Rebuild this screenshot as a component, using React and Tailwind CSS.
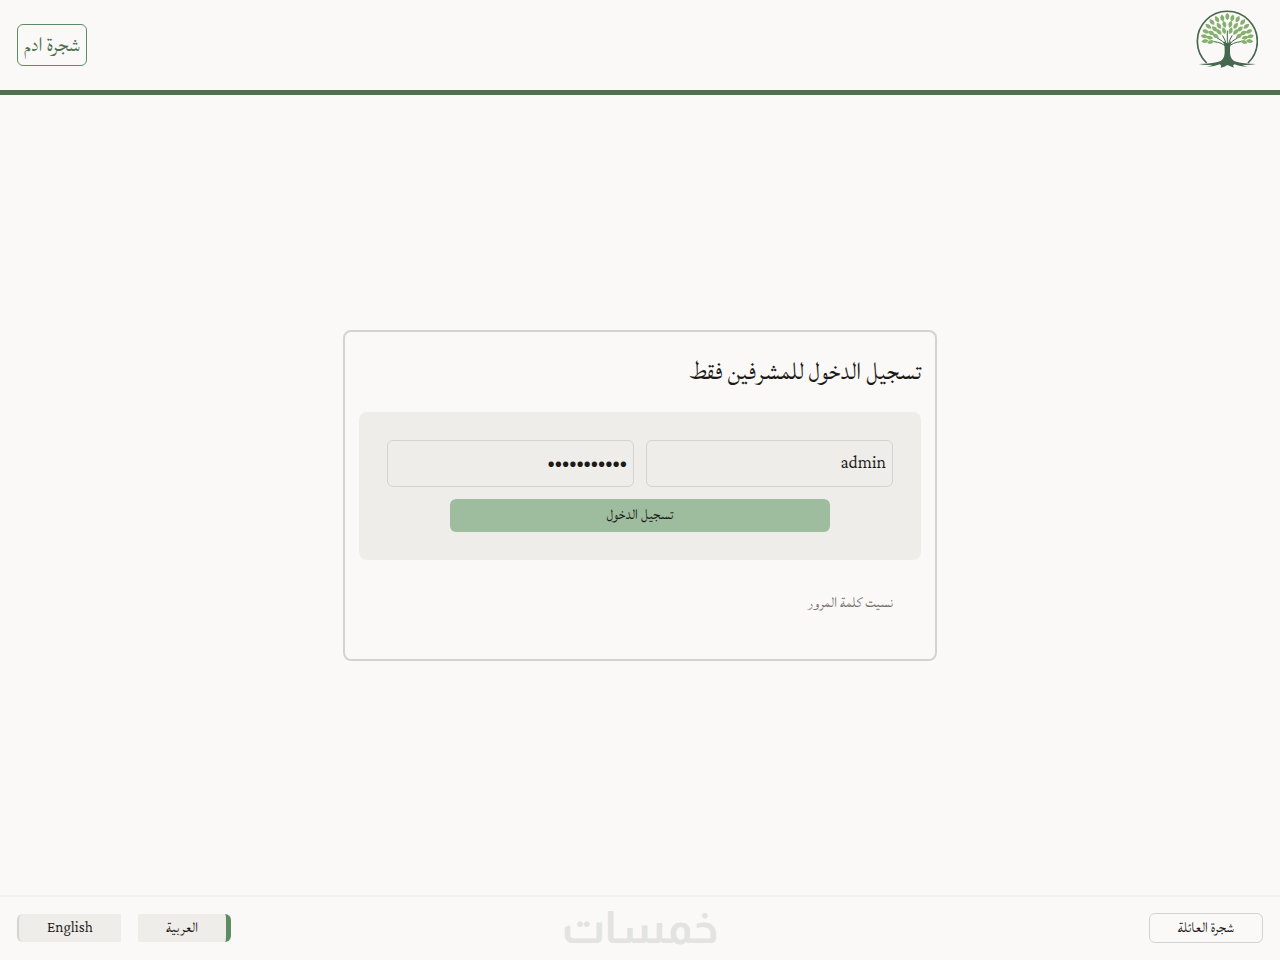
import React, { useState } from 'react';

// right half of the crown: [x, y, rotation], mirrored around the trunk
const leaves = [
  [15, 43, 12], [31, 47, 28], [46, 55, 40], [57, 68, 52], [65, 83, 64], [69, 98, 80],
  [9, 62, 14], [25, 66, 34], [38, 76, 48], [48, 88, 60], [53, 102, 80],
  [10, 81, 20], [25, 85, 42], [35, 97, 58],
  [67, 112, 98], [50, 115, 104],
];

const TreeLogo = () => (
  <svg viewBox="18 16 186 180" className="h-[60px] w-[62px]" role="img" aria-label="شجرة العائلة">
    <path d="M50 178 A90 90 0 1 1 174 178" fill="none" stroke="#45684e" strokeWidth="5" />
    <g fill="none" stroke="#45684e" strokeLinecap="round" strokeWidth="3">
      <path d="M112 130 V82" />
      <path d="M109 124 Q106 108 98 96 M115 124 Q118 108 126 96" />
      <path d="M108 126 Q100 111 82 103 M116 126 Q124 111 142 103" />
      <path d="M108 129 Q96 116 72 114 M116 129 Q128 116 152 114" />
    </g>
    <g fill="#86b06f">
      <path d="M112 27 Q124 38 112 50 Q100 38 112 27z" />
      {leaves.map(([x, y, r]) => (
        <React.Fragment key={`${x}-${y}`}>
          <path d="M0 -11 Q12 0 0 11 Q-12 0 0 -11z" transform={`translate(${112 + x} ${y}) rotate(${r})`} />
          <path d="M0 -11 Q12 0 0 11 Q-12 0 0 -11z" transform={`translate(${112 - x} ${y}) rotate(${-r})`} />
        </React.Fragment>
      ))}
    </g>
    <path
      d="M101 112 Q112 126 123 112 Q119 130 120 148 Q121 166 134 173 Q160 181 198 181 Q174 185 156 183 Q166 188 174 190 Q148 188 134 182 Q126 184 132 192 Q120 188 112 184 Q104 190 92 192 Q96 186 90 182 Q74 189 50 190 Q60 187 68 183 Q48 186 26 181 Q64 181 90 173 Q103 166 104 148 Q105 130 101 112z"
      fill="#45684e"
    />
  </svg>
);

const App = () => {
  const [username, setUsername] = useState('admin');
  const [password, setPassword] = useState('password123');
  const [lang, setLang] = useState('ar');

  const handleSubmit = (e) => {
    e.preventDefault();
  };

  return (
    <div dir="rtl" className="flex min-h-screen flex-col bg-[#faf9f7] font-['Lateef',serif] font-light text-[#1c1917]">
      <header className="flex h-[95px] items-center justify-between border-b-[5px] border-[#4f6f4f] px-[17px]">
        <a href="#home" className="mb-3 mr-[5px]">
          <TreeLogo />
        </a>
        <button type="button" className="h-[42px] rounded-md border border-[#5c8d62] px-[6px] text-[27px] leading-10 text-[#4f6f4f]">
          شجرة ادم
        </button>
      </header>

      <main className="flex flex-1 items-center justify-center">
        <section className="w-[594px] max-w-full rounded-lg border-2 border-[#d3d3cf] px-[14px] pb-10 pt-5">
          <h1 className="mb-5 text-[32px] leading-10">تسجيل الدخول للمشرفين فقط</h1>

          <form onSubmit={handleSubmit} className="flex flex-col items-center gap-3 rounded-lg bg-[#eeede9] p-7">
            <div className="flex w-full gap-3">
              <input
                type="text"
                aria-label="اسم المستخدم"
                className="h-[47px] w-full min-w-0 rounded-md border border-[#d3d3cf] px-[6px] text-[22px]"
                value={username}
                onChange={(e) => setUsername(e.target.value)}
              />
              <input
                type="password"
                aria-label="كلمة المرور"
                className="h-[47px] w-full min-w-0 rounded-md border border-[#d3d3cf] px-[6px] text-[22px]"
                value={password}
                onChange={(e) => setPassword(e.target.value)}
              />
            </div>
            <button type="submit" className="h-[33px] w-3/4 rounded-md bg-[#9ebd9e] text-[19px] leading-8">
              تسجيل الدخول
            </button>
          </form>

          <a href="#forgot" className="mx-7 mt-[27px] block text-[19px] leading-8 text-[#78716c]">نسيت كلمة المرور</a>
        </section>
      </main>

      <footer className="grid h-[65px] grid-cols-3 items-center border-t-2 border-[#f3f2f0] px-[17px] pb-px text-[19px] leading-7">
        <button type="button" className="h-[30px] w-[114px] rounded-md border border-[#d3d3cf]">
          شجرة العائلة
        </button>
        <a href="#khamsat" className="justify-self-center font-['Almarai',sans-serif] text-[44px] font-bold leading-[50px] text-[#e3e3e1]">
          خمسات
        </a>
        <div className="flex gap-[17px] justify-self-end">
          <button
            type="button"
            onClick={() => setLang('ar')}
            className={`h-7 w-[93px] rounded-r-md bg-[#eeede9] ${lang === 'ar' ? 'border-r-[5px] border-[#5c8d62]' : 'border-r-2 border-[#d3d3cf]'}`}
          >
            العربية
          </button>
          <button
            type="button"
            onClick={() => setLang('en')}
            className={`h-7 w-[104px] rounded-l-md bg-[#eeede9] ${lang === 'en' ? 'border-l-[5px] border-[#5c8d62]' : 'border-l-2 border-[#d3d3cf]'}`}
          >
            English
          </button>
        </div>
      </footer>
    </div>
  );
};

export default App;
